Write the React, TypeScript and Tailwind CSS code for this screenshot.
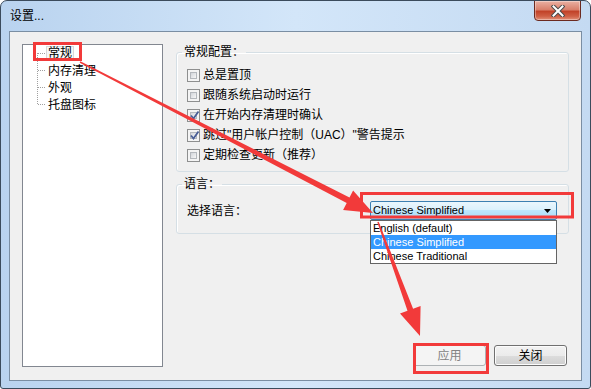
import React from "react";

const options = ["English (default)", "Chinese Simplified", "Chinese Traditional"];

const general = [
  { label: "总是置顶", checked: false },
  { label: "跟随系统启动时运行", checked: false },
  { label: "在开始内存清理时确认", checked: true },
  { label: "跳过\"用户帐户控制（UAC）\"警告提示", checked: true },
  { label: "定期检查更新（推荐）", checked: false },
];

function CheckBox({ checked }: { checked: boolean }) {
  return (
    <span className="relative shrink-0 w-[13px] h-[13px] border border-[#8e8f8f] bg-[#f4f4f4] p-[2px]">
      <span className="block w-full h-full border border-[#b4b8bd] bg-gradient-to-br from-[#d2d5da] to-[#f7f7f7]" />
      {checked && (
        <svg className="absolute left-[1px] top-[0px]" width="11" height="11" viewBox="0 0 11 11">
          <path d="M2 5.5 L4.5 8.5 L9.5 1.5" fill="none" stroke="#4a5f97" strokeWidth="1.8" />
        </svg>
      )}
    </span>
  );
}

function GroupBox({ title, className, children }: { title: string; className?: string; children: React.ReactNode }) {
  return (
    <fieldset className={`border border-[#d5dfe5] rounded-[3px] shadow-[inset_1px_1px_0_#ffffff] ${className ?? ""}`}>
      <legend className="ml-[5px] px-[2px] leading-[13px] text-[12px] text-black">{title}</legend>
      {children}
    </fieldset>
  );
}

export default function App() {
  return (
    <div className="relative w-[591px] h-[389px] bg-white font-['Liberation_Sans','Noto_Sans_CJK_SC',sans-serif] text-[12px] text-black">
      {/* window frame */}
      <div className="w-full h-full rounded-t-[7px] rounded-b-[3px] border border-[#3b4b5c] bg-gradient-to-r from-[#b9d3ef] via-[#d3e6f9] to-[#c4daf2] flex flex-col overflow-hidden">
        {/* title bar */}
        <div className="h-[30px] shrink-0 flex items-start justify-between pl-[9px] pr-[9px]">
          <span className="mt-[7px] leading-[16px] text-[12px] text-black">设置...</span>
          <button className="mt-[-1px] w-[47px] h-[21px] rounded-b-[4px] border border-[#6b2a20] bg-[linear-gradient(#eab1a3_0%,#d9806c_45%,#c24329_55%,#cf5f44_80%,#e2917a_100%)] flex items-center justify-center shadow-[inset_0_0_0_1px_rgba(255,255,255,0.35)]">
            <svg width="14" height="12" viewBox="0 0 14 12">
              <path d="M2.5 1.5 L11.5 10.5 M11.5 1.5 L2.5 10.5" stroke="#4a4a4a" strokeWidth="4" strokeLinecap="square" />
              <path d="M2.5 1.5 L11.5 10.5 M11.5 1.5 L2.5 10.5" stroke="#ffffff" strokeWidth="2" strokeLinecap="square" />
            </svg>
          </button>
        </div>

        {/* client area */}
        <div className="flex-1 mx-[8px] mb-[7px] border border-[#7a8ea3] bg-[#f0f0f0] flex">
          {/* tree */}
          <div className="relative ml-[12px] mt-[12px] w-[141px] h-[323px] border border-[#828790] bg-white">
            <svg className="absolute left-0 top-0" width="30" height="70" viewBox="0 0 30 70">
              <g stroke="#a0a0a0" strokeWidth="1" strokeDasharray="1 1" fill="none">
                <path d="M14.5 8 V60" />
                <path d="M15 8.5 H23 M15 25.5 H23 M15 42.5 H23 M15 59.5 H23" />
              </g>
            </svg>
            <ul className="pl-[23px]">
              <li className="h-[17px] flex items-center">
                <span className="leading-[13px] border border-[#d9d9d9] bg-[#f7f7f7] px-[1px]">常规</span>
              </li>
              <li className="h-[17px] flex items-center pl-[2px]">内存清理</li>
              <li className="h-[17px] flex items-center pl-[2px]">外观</li>
              <li className="h-[17px] flex items-center pl-[2px]">托盘图标</li>
            </ul>
          </div>

          {/* settings */}
          <div className="ml-[13px] w-[393px] flex flex-col">
            <GroupBox title="常规配置：" className="mt-[14px]">
              <div className="pt-[6px] pb-[6px] pl-[10px]">
                {general.map((item) => (
                  <label key={item.label} className="h-[20px] flex items-center gap-[3px]">
                    <CheckBox checked={item.checked} />
                    <span className="leading-[14px]">{item.label}</span>
                  </label>
                ))}
              </div>
            </GroupBox>

            <GroupBox title="语言：" className="mt-[6px]">
              <div className="pt-[10px] pb-[13px] pl-[10px] flex items-center">
                <span className="w-[183px] leading-[14px]">选择语言：</span>
                <div className="relative w-[187px] h-[19px]">
                  <div className="h-full rounded-[2px] border border-[#3c7fb1] bg-[linear-gradient(#eaf6fd_0%,#d9f0fc_50%,#bee6fd_50%,#a7d9f5_100%)] flex items-center justify-between pl-[2px] pr-[5px]">
                    <span className="text-[11px] leading-[13px] font-['Liberation_Sans',sans-serif]">Chinese Simplified</span>
                    <svg width="7" height="4" viewBox="0 0 7 4">
                      <path d="M0 0 H7 L3.5 4 Z" fill="#000" />
                    </svg>
                  </div>
                  {/* open list */}
                  <ul className="absolute left-0 top-full w-full border border-[#646464] bg-white z-10">
                    {options.map((o) => (
                      <li
                        key={o}
                        className={`h-[14px] pl-[2px] text-[11px] leading-[14px] font-['Liberation_Sans',sans-serif] ${
                          o === "Chinese Simplified" ? "bg-[#3399ff] text-white" : "text-black"
                        }`}
                      >
                        {o}
                      </li>
                    ))}
                  </ul>
                </div>
              </div>
            </GroupBox>

            <div className="mt-auto mb-[14px] pr-[2px] flex justify-end gap-[8px]">
              <button className="w-[73px] h-[21px] rounded-[3px] border border-[#adb2b5] bg-[#f4f4f4] text-[#838383] leading-[14px]">
                应用
              </button>
              <button className="w-[73px] h-[21px] rounded-[3px] border border-[#707070] bg-[linear-gradient(#f2f2f2_0%,#ebebeb_50%,#dddddd_50%,#cfcfcf_100%)] shadow-[inset_0_0_0_1px_#fcfcfc] leading-[14px]">
                关闭
              </button>
            </div>
          </div>
        </div>
      </div>

      {/* red annotation marks */}
      <svg className="absolute inset-0 pointer-events-none z-20" width="591" height="389" viewBox="0 0 591 389">
        <g fill="none" stroke="#f23a3a" strokeWidth="3">
          <rect x="34.5" y="43.5" width="46" height="16" />
          <rect x="361.5" y="193.5" width="211" height="23.5" />
          <rect x="414.5" y="344.5" width="73" height="28" />
        </g>
        <g fill="#f23a3a">
          <polygon points="80.3,61.3 349.5,197.5 353.1,190.4 373,213 343.1,210 346.7,202.9 79.7,62.7" />
          <polygon points="378.7,221.7 413.1,308.7 420.6,305.9 420,336 400,313.5 407.5,310.7 377.3,222.3" />
        </g>
      </svg>
    </div>
  );
}
